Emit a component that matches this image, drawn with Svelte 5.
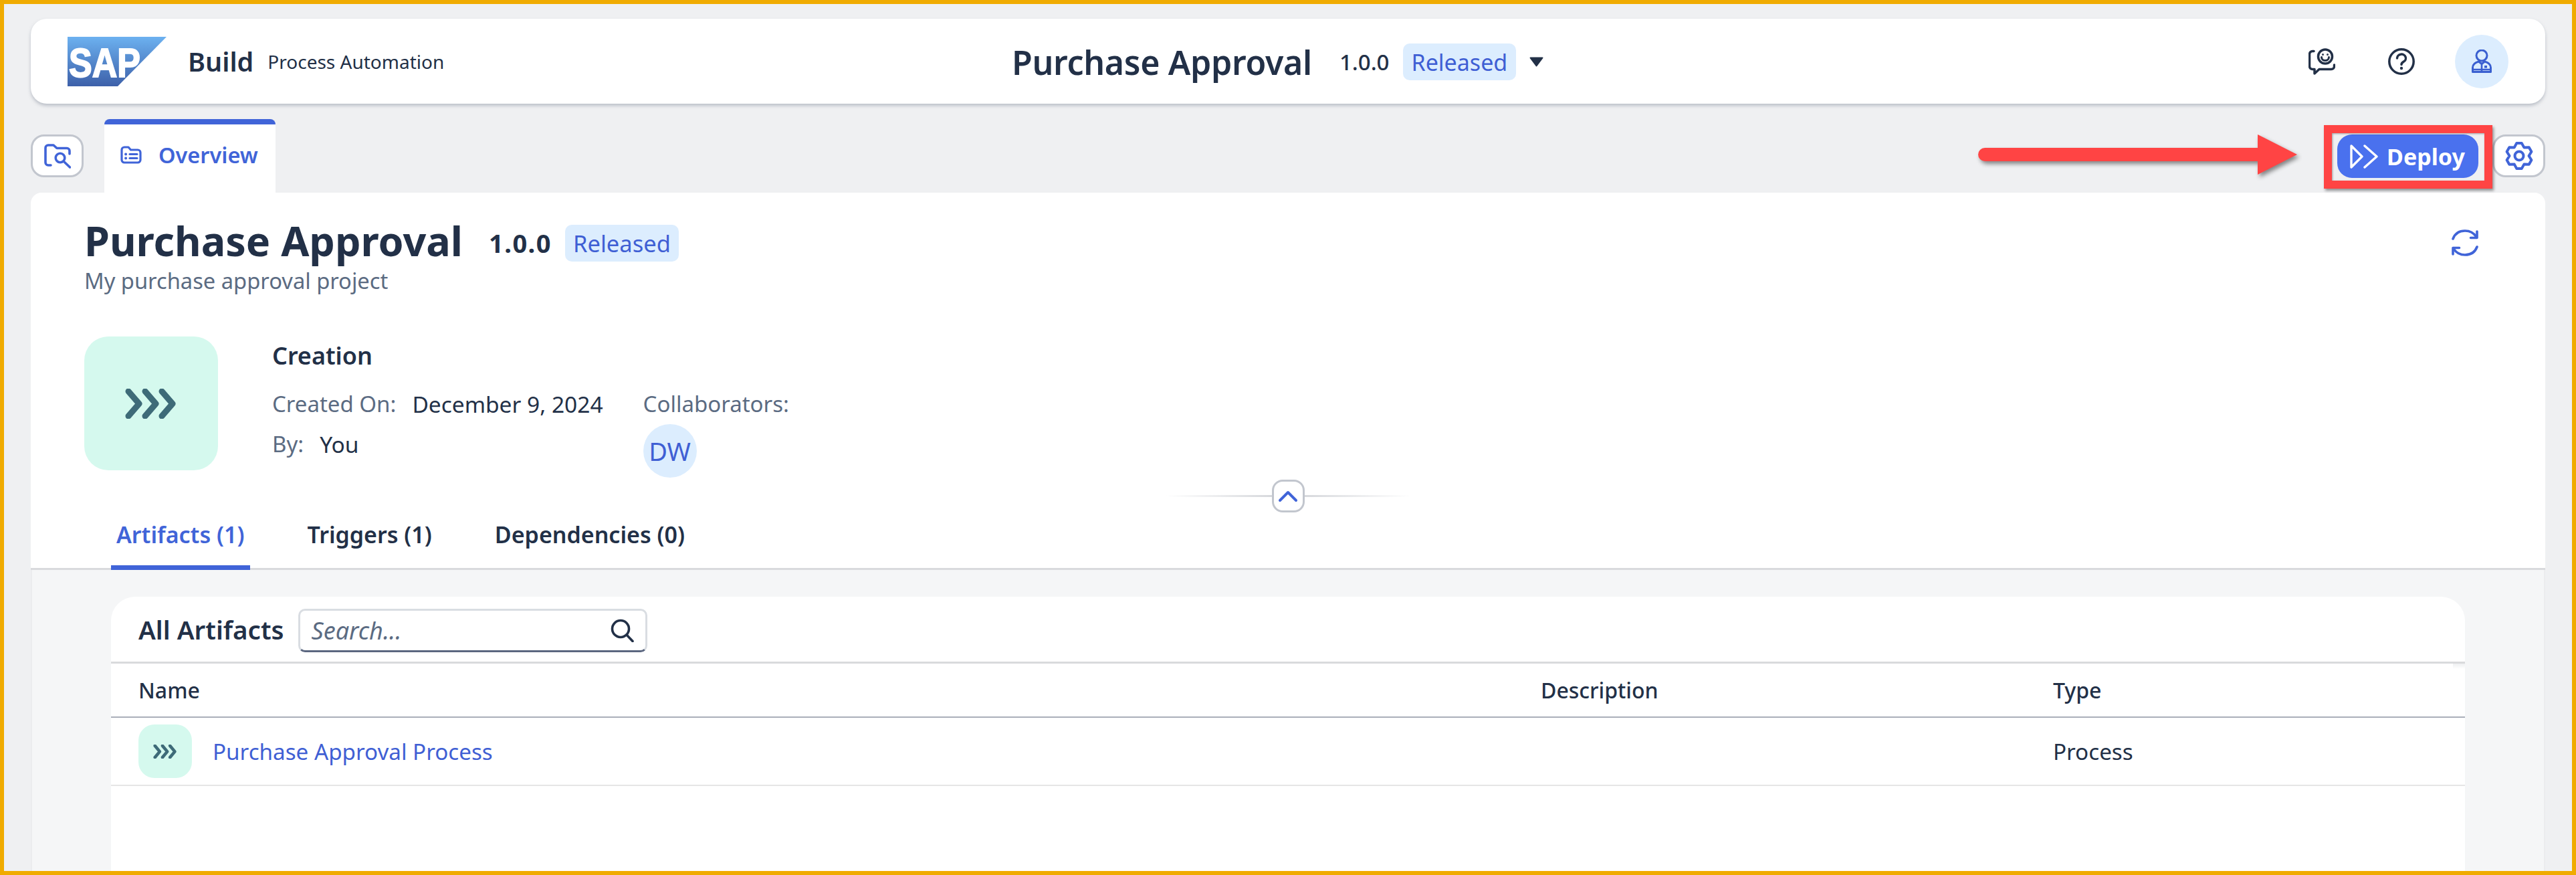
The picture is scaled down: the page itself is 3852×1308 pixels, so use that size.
<script>
  // six lobed gear outline, centred on 22,22
  const gearPath = [0, 1, 2, 3, 4, 5]
    .map((i) => {
      const a = ((-90 + 60 * i) * Math.PI) / 180;
      const pt = (off, r) => {
        const t = a + (off * Math.PI) / 180;
        return `${(22 + r * Math.cos(t)).toFixed(1)} ${(22 + r * Math.sin(t)).toFixed(1)}`;
      };
      return `${i ? 'L' : 'M'}${pt(-11, 19.5)} L${pt(11, 19.5)} L${pt(30, 14.5)}`;
    })
    .join(' ') + ' Z';

  const tabs = [
    { label: 'Artifacts (1)', active: true },
    { label: 'Triggers (1)', active: false },
    { label: 'Dependencies (0)', active: false }
  ];
</script>

{#snippet chevrons(cls)}
  <svg class={cls} viewBox="0 0 80 45" preserveAspectRatio="none" fill="none" stroke="#3e6b78" stroke-linecap="round" stroke-linejoin="round">
    <path d="M6 4 L22 22.5 L6 41" />
    <path d="M31 4 L47 22.5 L31 41" />
    <path d="M56 4 L72 22.5 L56 41" />
  </svg>
{/snippet}

<div class="page">
  <header class="shell">
    <div class="brand">
      <svg class="logo" viewBox="0 0 148 74">
        <defs>
          <linearGradient id="sapfill" x1="0" y1="0" x2="0" y2="1">
            <stop offset="0" stop-color="#6cb1f0" />
            <stop offset="1" stop-color="#3d60a9" />
          </linearGradient>
        </defs>
        <polygon points="0,0 148,0 75,74 0,74" fill="url(#sapfill)" />
        <text x="2" y="60" textLength="107" lengthAdjust="spacingAndGlyphs" class="logo-text">SAP</text>
      </svg>
      <span class="build">Build</span>
      <span class="product">Process Automation</span>
    </div>
    <div class="center">
      <span class="center-title">Purchase Approval</span>
      <span class="center-version">1.0.0</span>
      <span class="badge">Released</span>
      <svg class="caret" viewBox="0 0 21 15"><path d="M1.5 1.5 H19.5 L10.5 13.5 Z" fill="#223047" stroke="#223047" stroke-width="2" stroke-linejoin="round" /></svg>
    </div>
    <div class="shell-actions">
      <svg class="ico40" viewBox="0 0 40 40" fill="none" stroke="#223047" stroke-width="3.5" stroke-linecap="round" stroke-linejoin="round">
        <circle cx="25" cy="12.5" r="10.5" />
        <path d="M8 4.5 H6 a4.5 4.5 0 0 0 -4.5 4.5 V27 a4.5 4.5 0 0 0 4.5 4.5 H9 V38 L16 31.5 H34 a4.5 4.5 0 0 0 4.5 -4.5 V25" />
        <path d="M19.5 13.5 a5.5 5 0 0 0 11 0" stroke-width="3" />
        <circle cx="21.5" cy="9.5" r="0.6" stroke-width="1.8" />
        <circle cx="28.5" cy="9.5" r="0.6" stroke-width="1.8" />
      </svg>
      <svg class="ico40 help" viewBox="0 0 40 40" fill="none" stroke="#223047" stroke-width="3.5" stroke-linecap="round">
        <circle cx="20" cy="20" r="18.2" />
        <path d="M13.5 15 a6.5 6 0 1 1 9.5 5.4 c-2.2 1.2 -3 2.2 -3 4.1" />
        <circle cx="20" cy="30" r="1" stroke-width="2.4" />
      </svg>
      <div class="avatar">
        <svg class="avatar-ico" viewBox="0 0 30 35" fill="none" stroke="#3a5fd0" stroke-width="3" stroke-linejoin="round">
          <circle cx="15" cy="9" r="8" />
          <path d="M10.5 18 C5 19.5 1.5 22.5 1.5 27 V33.5 H28.5 V27 C28.5 22.5 25 19.5 19.5 18 L15 21.5 Z" />
          <path d="M1.5 30 H28.5 M15 21.5 V33" stroke-width="2.6" />
          <rect x="19" y="24" width="4" height="3.6" fill="#3a5fd0" stroke="none" />
        </svg>
      </div>
    </div>
  </header>

  <div class="toolbar">
    <button class="icon-btn search-btn" aria-label="Browse">
      <svg class="folder-search" viewBox="0 0 40 37" fill="none" stroke="#4064d8" stroke-width="3.6" stroke-linecap="round" stroke-linejoin="round">
        <path d="M10 32 H6 a4 4 0 0 1 -4 -4 V6 a4 4 0 0 1 4 -4 H14 L19 6.5 H34 a4 4 0 0 1 4 4 V15" />
        <circle cx="24" cy="21" r="6.8" />
        <path d="M29.5 26.5 L38.5 35" />
      </svg>
    </button>
    <div class="page-tab">
      <svg class="overview-ico" viewBox="0 0 32 27" fill="none" stroke="#4064d8" stroke-width="3.2" stroke-linecap="round" stroke-linejoin="round">
        <path d="M2 6 a4 4 0 0 1 4 -4 H12 L15.5 6 H26 a4 4 0 0 1 4 4 V21 a4 4 0 0 1 -4 4 H6 a4 4 0 0 1 -4 -4 Z" />
        <path d="M14 12.5 H25 M14 18.5 H25" />
        <path d="M8 12.5 H8.2 M8 18.5 H8.2" stroke-width="3.8" />
      </svg>
      <span>Overview</span>
    </div>
    <div class="toolbar-actions">
      <button class="deploy">
        <svg class="deploy-ico" viewBox="0 0 42 36" fill="none" stroke="#fff" stroke-width="3.4" stroke-linecap="round" stroke-linejoin="round">
          <path d="M2 2 L18 18 L2 34 Z" />
          <path d="M22 2 L40 18 L22 34" />
        </svg>
        <span>Deploy</span>
      </button>
      <button class="icon-btn" aria-label="Settings">
        <svg class="gear" viewBox="0 0 44 44" fill="none" stroke="#4064d8" stroke-width="4" stroke-linejoin="round">
          <path d={gearPath} />
          <circle cx="22" cy="22" r="6.5" />
        </svg>
      </button>
    </div>

    <!-- annotation drawn over the screenshot -->
    <svg class="arrow" viewBox="0 0 477 60">
      <path d="M10 20 H418 V0 L477 30 L418 60 V40 H10 a10 10 0 0 1 0 -20 Z" fill="#ff4444" />
    </svg>
    <div class="highlight"></div>
  </div>

  <main class="project">
    <section class="summary">
      <div class="title-row">
        <h1>Purchase Approval</h1>
        <span class="version">1.0.0</span>
        <span class="badge">Released</span>
        <svg class="refresh" viewBox="0 0 40 40" fill="none" stroke="#4064d8" stroke-width="3.6" stroke-linecap="round" stroke-linejoin="round">
          <path d="M2 14 C5 6 12 2 20 2 C27 2 33 5 37 11" />
          <path d="M38 3 V12.5 H28.5" />
          <path d="M38 26 C35 34 28 38 20 38 C13 38 7 35 3 29" />
          <path d="M2 37 V27.5 H11.5" />
        </svg>
      </div>
      <p class="subtitle">My purchase approval project</p>

      <div class="creation">
        <div class="big-icon">{@render chevrons('chev-big')}</div>
        <div class="creation-info">
          <h2>Creation</h2>
          <div class="creation-cols">
            <dl class="facts">
              <div><dt>Created On:</dt><dd>December 9, 2024</dd></div>
              <div><dt>By:</dt><dd>You</dd></div>
            </dl>
            <div class="collab">
              <span class="collab-label">Collaborators:</span>
              <span class="initials">DW</span>
            </div>
          </div>
        </div>
      </div>

      <div class="collapse-row">
        <button class="collapse" aria-label="Collapse">
          <svg viewBox="0 0 30 20" fill="none" stroke="#4064d8" stroke-width="4" stroke-linecap="round" stroke-linejoin="round">
            <path d="M3 16 L15 4 L27 16" />
          </svg>
        </button>
      </div>

      <nav class="tabs">
        {#each tabs as tab}
          <span class="tab" class:active={tab.active}>{tab.label}</span>
        {/each}
      </nav>
    </section>

    <section class="lower">
      <div class="table-card">
        <div class="table-bar">
          <span class="table-title">All Artifacts</span>
          <div class="search">
            <span>Search...</span>
            <svg class="search-ico" viewBox="0 0 35 35" fill="none" stroke="#223047" stroke-width="3.6" stroke-linecap="round">
              <circle cx="15" cy="15" r="12.5" />
              <path d="M24 24 L33 33.5" />
            </svg>
          </div>
        </div>
        <div class="row head">
          <span>Name</span>
          <span>Description</span>
          <span>Type</span>
        </div>
        <div class="row item">
          <span class="name-cell">
            <span class="small-icon">{@render chevrons('chev-small')}</span>
            <span class="link">Purchase Approval Process</span>
          </span>
          <span></span>
          <span>Process</span>
        </div>
      </div>
    </section>
  </main>
</div>

<style>
  :global(body) {
    margin: 0;
  }

  .page {
    box-sizing: border-box;
    width: 3852px;
    height: 1308px;
    border: 6px solid #f0ab00;
    padding: 22px 40px 0;
    background: #eff0f2;
    display: flex;
    flex-direction: column;
    overflow: hidden;
    font-family: 'Noto Sans', sans-serif;
    color: #223047;
  }

  button {
    padding: 0;
    font: inherit;
    cursor: pointer;
  }

  /* Shell bar */
  .shell {
    flex: 0 0 127px;
    background: #fff;
    border-radius: 24px;
    box-shadow: 0 3px 5px rgba(90, 100, 120, 0.35);
    display: flex;
    align-items: center;
    padding: 0 55px;
  }

  .brand {
    flex: 0 0 1412px;
    display: flex;
    align-items: center;
  }

  .logo {
    width: 148px;
    height: 74px;
  }

  .logo-text {
    font-family: 'Liberation Sans', sans-serif;
    font-weight: 700;
    font-size: 62px;
    fill: #fff;
    stroke: #fff;
    stroke-width: 2px;
  }

  .build {
    margin-left: 32px;
    font-size: 39.5px;
    font-weight: 600;
  }

  .product {
    margin-left: 21px;
    font-size: 28px;
  }

  .center {
    display: flex;
    align-items: center;
    padding-top: 2px;
  }

  .center-title {
    font-size: 50px;
    font-weight: 600;
    letter-spacing: -0.3px;
  }

  .center-version {
    margin-left: 41px;
    font-size: 33px;
    font-weight: 500;
  }

  .badge {
    margin-left: 20px;
    height: 55px;
    padding: 0 13px;
    display: inline-flex;
    align-items: center;
    background: #dcedfe;
    border-radius: 10px;
    color: #3f5fd4;
    font-size: 34px;
  }

  .caret {
    width: 21px;
    height: 15px;
    margin-left: 20px;
  }

  .shell-actions {
    margin-left: auto;
    display: flex;
    align-items: center;
  }

  .ico40 {
    width: 40px;
    height: 40px;
  }

  .help {
    margin-left: 79px;
  }

  .avatar {
    margin-left: 60px;
    width: 80px;
    height: 80px;
    border-radius: 50%;
    background: #dcedfe;
    display: flex;
    align-items: center;
    justify-content: center;
  }

  .avatar-ico {
    width: 30px;
    height: 35px;
  }

  /* Toolbar */
  .toolbar {
    flex: 0 0 110px;
    margin-top: 23px;
    position: relative;
    display: flex;
    align-items: flex-start;
  }

  .icon-btn {
    width: 79px;
    height: 64px;
    margin-top: 23px;
    box-sizing: border-box;
    border: 3px solid #c2c6ce;
    border-radius: 20px;
    background: #fff;
    display: flex;
    align-items: center;
    justify-content: center;
  }

  .folder-search {
    width: 40px;
    height: 37px;
  }

  .page-tab {
    box-sizing: border-box;
    width: 256px;
    height: 110px;
    margin-left: 31px;
    border-top: 8px solid #4064d8;
    border-radius: 8px 8px 0 0;
    background: #fff;
    padding: 0 0 12px 24px;
    display: flex;
    align-items: center;
    gap: 25px;
    color: #4064d8;
    font-size: 32.5px;
    font-weight: 600;
  }

  .overview-ico {
    width: 32px;
    height: 27px;
  }

  .toolbar-actions {
    margin-left: auto;
    display: flex;
    gap: 21px;
  }

  .deploy {
    box-sizing: border-box;
    width: 211px;
    height: 65px;
    margin-top: 23px;
    border: 0;
    border-radius: 22px;
    background: #4a71ee;
    color: #fff;
    font-size: 34px;
    font-weight: 700;
    display: flex;
    align-items: center;
    padding-left: 19px;
    gap: 13px;
  }

  .deploy-ico {
    width: 42px;
    height: 36px;
  }

  .gear {
    width: 44px;
    height: 44px;
  }

  .arrow {
    position: absolute;
    left: 2912px;
    top: 23px;
    width: 477px;
    height: 60px;
    filter: drop-shadow(3px 4px 3px rgba(0, 0, 0, 0.45));
  }

  .highlight {
    position: absolute;
    left: 3429px;
    top: 9px;
    box-sizing: border-box;
    width: 252px;
    height: 95px;
    border: 12px solid #ff4444;
    box-shadow: 2px 3px 4px rgba(0, 0, 0, 0.4), inset 1px 1px 3px rgba(0, 0, 0, 0.35);
  }

  /* Project page */
  .project {
    flex: 1;
    display: flex;
    flex-direction: column;
    background: #fff;
    border-radius: 16px 16px 0 0;
    min-height: 0;
  }

  .summary {
    box-sizing: border-box;
    flex: 0 0 564px;
    padding: 38px 80px 0;
    border-bottom: 3px solid #d9dadd;
    display: flex;
    flex-direction: column;
  }

  .title-row {
    display: flex;
    align-items: center;
    height: 74px;
  }

  h1 {
    margin: -6px 0 0;
    font-size: 61px;
    font-weight: 700;
    line-height: 68px;
  }

  .version {
    margin-left: 39px;
    font-size: 38px;
    font-weight: 700;
    letter-spacing: 1.5px;
  }

  .title-row .badge {
    font-size: 34.5px;
    padding: 0 12px;
  }

  .refresh {
    width: 40px;
    height: 40px;
    margin-left: auto;
    margin-right: 20px;
  }

  .subtitle {
    margin: 0;
    font-size: 32.7px;
    line-height: 40px;
    color: #5b6b82;
  }

  .creation {
    margin-top: 63px;
    display: flex;
    gap: 81px;
  }

  .big-icon {
    flex: 0 0 200px;
    height: 200px;
    border-radius: 36px;
    background: #d5f9ee;
    display: flex;
    align-items: center;
    justify-content: center;
  }

  .chev-big {
    width: 80px;
    height: 45px;
    stroke-width: 9px;
  }

  h2 {
    margin: 7px 0 0;
    font-size: 36px;
    font-weight: 600;
    line-height: 44px;
  }

  .creation-cols {
    margin-top: 28px;
    display: flex;
    gap: 60px;
    font-size: 33px;
    line-height: 44px;
  }

  .facts {
    margin: 0;
    display: flex;
    flex-direction: column;
    gap: 16px;
  }

  .facts div {
    display: flex;
    gap: 24px;
  }

  dt {
    color: #5b6b82;
  }

  dd {
    margin: 0;
    font-size: 33.5px;
  }

  .collab {
    display: flex;
    flex-direction: column;
    align-items: flex-start;
    gap: 8px;
  }

  .collab-label {
    color: #5b6b82;
  }

  .initials {
    width: 80px;
    height: 80px;
    border-radius: 50%;
    background: #dcedfe;
    color: #3f5fd4;
    font-size: 38px;
    display: flex;
    align-items: center;
    justify-content: center;
  }

  .collapse-row {
    align-self: center;
    flex: none;
    margin-top: 26px;
    width: 365px;
    height: 3px;
    background: linear-gradient(90deg, transparent, #d5d7db 45%, #d5d7db 55%, transparent);
    display: flex;
    align-items: center;
    justify-content: center;
  }

  .collapse {
    box-sizing: border-box;
    width: 49px;
    height: 49px;
    flex: none;
    border: 3px solid #c2c6ce;
    border-radius: 16px;
    background: #fff;
    display: flex;
    align-items: center;
    justify-content: center;
  }

  .collapse svg {
    width: 30px;
    height: 20px;
  }

  .tabs {
    margin: auto 0 -3px 40px;
    display: flex;
    gap: 78px;
  }

  .tab {
    padding: 0 8px 24px;
    border-bottom: 7px solid transparent;
    font-size: 34px;
    font-weight: 600;
    line-height: 44px;
  }

  .tab.active {
    color: #4064d8;
    border-bottom-color: #4064d8;
    border-radius: 8px 8px 0 0;
  }

  .lower {
    flex: 1;
    min-height: 0;
    background: #f5f6f7;
    padding: 40px 120px 0;
    display: flex;
    box-shadow: inset 2px 0 0 #ebecee, inset -2px 0 0 #ebecee;
  }

  .table-card {
    flex: 1;
    background: #fff;
    border-radius: 36px 36px 0 0;
  }

  .table-bar {
    box-sizing: border-box;
    height: 100px;
    border-bottom: 3px solid #d9dadc;
    padding: 0 0 0 41px;
    display: flex;
    align-items: flex-start;
  }

  .table-title {
    margin-top: 26px;
    font-size: 38.5px;
    font-weight: 600;
    line-height: 46px;
  }

  .search {
    box-sizing: border-box;
    width: 522px;
    height: 65px;
    margin: 18px 0 0 21px;
    border: 3px solid #d9dde2;
    border-bottom-color: #5b6780;
    border-radius: 10px;
    padding: 0 17px;
    display: flex;
    align-items: center;
    justify-content: space-between;
    font-size: 36px;
    font-style: italic;
    color: #5b6b82;
  }

  .search-ico {
    width: 35px;
    height: 35px;
  }

  .row {
    display: grid;
    grid-template-columns: 2097px 766px 1fr;
    align-items: center;
    padding-left: 41px;
    font-size: 33.2px;
  }

  .head {
    position: relative;
    height: 81px;
    border-bottom: 2px solid #a9aeb9;
    box-sizing: border-box;
    font-size: 32px;
    font-weight: 500;
  }

  .head::after {
    content: '';
    position: absolute;
    right: 0;
    top: 0;
    width: 18px;
    height: 8px;
    background: linear-gradient(#eeeff1, #fff);
  }

  .item {
    box-sizing: border-box;
    height: 102px;
    border-bottom: 2px solid #e5e5e5;
  }

  .name-cell {
    display: flex;
    align-items: center;
    gap: 31px;
  }

  .small-icon {
    width: 80px;
    height: 80px;
    border-radius: 24px;
    background: #d5f9ee;
    display: flex;
    align-items: center;
    justify-content: center;
  }

  .chev-small {
    width: 36px;
    height: 21px;
    stroke-width: 10px;
  }

  .link {
    color: #3f5fd4;
  }
</style>
